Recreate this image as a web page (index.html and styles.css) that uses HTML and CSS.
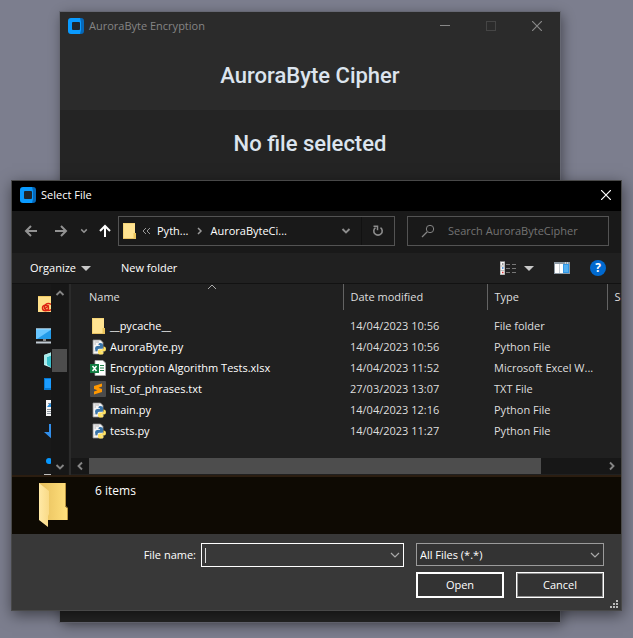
FILE: index.html
```html
<!DOCTYPE html>
<html lang="en">
<head>
<meta charset="utf-8">
<title>AuroraByte Encryption</title>
<link rel="stylesheet" href="styles.css">
</head>
<body>
<svg class="sprite" aria-hidden="true">
  <symbol id="logo" viewBox="0 0 16 16">
    <path d="M3 0H13V16H3Q0 16 0 13V3Q0 0 3 0Z" fill="#0a9bff"/>
    <path d="M12 0H13Q16 0 16 3V13Q16 16 13 16H12L13 12V4Z" fill="#0668b8"/>
    <rect x="4" y="4" width="8" height="8" rx="1" fill="#20262b"/>
  </symbol>
  <symbol id="close" viewBox="0 0 10 10">
    <path d="M0 0L10 10M10 0L0 10" fill="none" stroke="currentColor" stroke-width="1.2"/>
  </symbol>
  <symbol id="chevron" viewBox="0 0 10 10">
    <path d="M1.500 3L5 6.500L8.500 3" fill="none" stroke="currentColor" stroke-width="1.900"/>
  </symbol>
  <symbol id="thin-chevron" viewBox="0 0 10 10">
    <path d="M1 3L5 7L9 3" fill="none" stroke="currentColor" stroke-width="1.200"/>
  </symbol>
  <symbol id="arrow" viewBox="0 0 14 14">
    <path d="M13 7H2M7 2L2 7L7 12" fill="none" stroke="currentColor" stroke-width="2"/>
  </symbol>
  <symbol id="folder" viewBox="0 0 16 16">
    <path d="M2 0H14V10L15 11V16H2Z" fill="#ffe391"/>
    <path d="M2 0H14V1H3V15H2Z" fill="#f5d477"/>
    <path d="M12.500 10H15V16H12.500Z" fill="#eac45b"/>
    <path d="M2 15H15V16H2Z" fill="#e8c263"/>
  </symbol>
  <symbol id="python" viewBox="0 0 16 16">
    <path d="M3 1H10.500L13 3.500V15H3Z" fill="#f5f5f5" stroke="#8e8e8e" stroke-width=".8"/>
    <path d="M4.500 3H9M4.500 5H6M4.500 12H7" stroke="#b5b5b5"/>
    <path d="M8.500 5.200Q8.500 4 10.500 4Q13 4 13 5.800V8.500Q13 9.800 11.500 9.800H9Q7.500 9.800 7.500 11.500V12.200H6.800Q5 12.200 5 9.500Q5 7 7 7H10V6.300H8.500Z" fill="#3974a8"/>
    <path d="M13.500 7.500H14Q16 7.500 16 10Q16 12.500 14 12.500H11.500V13.200H13.500V14Q13.500 15.600 11 15.600Q8 15.600 8 13.800V12Q8 10.500 9.500 10.500H12Q13.500 10.500 13.500 9Z" fill="#ffe263"/>
  </symbol>
</svg>

<main class="app">
  <header class="app-bar">
    <svg class="logo"><use href="#logo"/></svg>
    <span class="app-name">AuroraByte Encryption</span>
    <div class="window-buttons">
      <button aria-label="Minimize"><svg width="10" height="10"><path d="M0 4.500H10" stroke="#888"/></svg></button>
      <button aria-label="Maximize" disabled><svg width="10" height="10"><rect x=".5" y=".5" width="9" height="9" fill="none" stroke="#454545"/></svg></button>
      <button aria-label="Close"><svg width="10" height="10"><use href="#close"/></svg></button>
    </div>
  </header>
  <h1 class="heading">AuroraByte Cipher</h1>
  <p class="status">No file selected</p>
</main>

<section class="dialog" role="dialog" aria-labelledby="dialog-title">
  <header class="dialog-bar">
    <svg class="logo"><use href="#logo"/></svg>
    <h2 id="dialog-title">Select File</h2>
    <button class="dialog-close" aria-label="Close"><svg width="10" height="10"><use href="#close"/></svg></button>
  </header>

  <div class="nav">
    <button class="nav-button" aria-label="Back"><svg width="14" height="14"><use href="#arrow"/></svg></button>
    <button class="nav-button" aria-label="Forward"><svg class="flip" width="14" height="14"><use href="#arrow"/></svg></button>
    <button class="nav-button narrow" aria-label="Recent locations"><svg width="8" height="8"><use href="#chevron"/></svg></button>
    <button class="nav-button up" aria-label="Up"><svg class="turn" width="14" height="14"><use href="#arrow"/></svg></button>
    <div class="address">
      <svg class="icon" width="16" height="16"><use href="#folder"/></svg>
      <svg class="crumb-more" width="9" height="8"><path d="M4 1L1 4L4 7M8 1L5 4L8 7" fill="none" stroke="#999"/></svg>
      <a class="crumb" href="#python-folder">Pyth...</a>
      <svg class="crumb-sep" width="6" height="8"><path d="M1 1L4 4L1 7" fill="none" stroke="#999" stroke-width="1.500"/></svg>
      <a class="crumb" href="#current-folder">AuroraByteCi...</a>
      <button class="address-menu" aria-label="Previous locations"><svg width="10" height="10"><use href="#chevron"/></svg></button>
      <button class="refresh" aria-label="Refresh"><svg width="12" height="12"><path d="M8.500 2.600A4.200 4.200 0 1 1 3.500 2.600" fill="none" stroke="#8c8c8c" stroke-width="1.600"/><path d="M1.500 1.200H5.500V5.200" fill="none" stroke="#8c8c8c" stroke-width="1.500"/></svg></button>
    </div>
    <label class="search">
      <svg width="14" height="14"><circle cx="9" cy="5" r="3.700" fill="none" stroke="#858585"/><path d="M6 8L1 13" stroke="#858585" stroke-width="1.200"/></svg>
      <input type="search" placeholder="Search AuroraByteCipher" aria-label="Search AuroraByteCipher">
    </label>
  </div>

  <div class="toolbar">
    <button class="organize">Organize <span class="drop"></span></button>
    <button>New folder</button>
    <div class="tools">
      <button class="view" aria-label="Change your view">
        <svg width="17" height="14"><rect x="0" y="1" width="5" height="13" fill="#f4f4f4"/><path d="M0 .5H5M0 5H5M0 9.500H5M0 13.500H5M.5 1V14M4.500 1V14" stroke="#a5a5a5" stroke-width=".7"/><path d="M2 3H3.500" stroke="#777" stroke-width="1.500"/><path d="M2 7H3.500" stroke="#2d7dd2" stroke-width="1.500"/><path d="M2 11.500H3.500" stroke="#d33" stroke-width="1.500"/><path d="M6 3.500H10M12 3.500H16M6 7.500H10M12 7.500H16M6 11.500H10M12 11.500H16" stroke="#777"/></svg>
        <span class="drop"></span>
      </button>
      <button aria-label="Show the preview pane">
        <svg width="16" height="12"><rect width="16" height="12" fill="#8d9aa5"/><path d="M1 2H5V11H1ZM5.500 2H9V11H5.500Z" fill="#fff"/><rect x="9" y="2" width="6" height="9" fill="#3298e6"/><rect x="10" y="3" width="4" height="7" fill="#55b0f0"/><path d="M11 1H12M13 1H14" stroke="#fff"/></svg>
      </button>
      <button class="help" aria-label="Help">?</button>
    </div>
  </div>

  <div class="browser">
    <nav class="places" aria-label="Places">
      <ul>
        <li class="root"><a href="#creative" aria-label="Creative Cloud Files"><svg width="16" height="16"><path d="M2 0H16V16H2Z" fill="#ffe08a"/><path d="M2 .5H16" stroke="#efc864"/><g fill="none" stroke="#dc2414" stroke-width="1.500"><ellipse cx="9.500" cy="12" rx="3" ry="2.800"/><ellipse cx="12.500" cy="11" rx="4" ry="3.500"/><path d="M8.500 13L13 9.500"/></g></svg></a></li>
        <li class="root pc"><a href="#pc" aria-label="This PC"><svg width="16" height="16"><rect y="1" width="18" height="10" fill="#68c6ff"/><path d="M1 11L16 1V11Z" fill="#239be9"/><path d="M0 .8H16" stroke="#bce6ff"/><path d="M7 11H10V13H7Z" fill="#888"/><path d="M0 14.500H16" stroke="#c2ccd5" stroke-width="2"/></svg></a></li>
        <li><a href="#objects" aria-label="3D Objects"><svg width="16" height="16"><path d="M0 3L8 0V16L0 13Z" fill="#d0f5f4"/><path d="M3 5L8 3V16L3 13Z" fill="#38c1cc"/><path d="M0 3L8 0V3L3 5V12L0 13Z" fill="#a9eaea"/></svg></a></li>
        <li><a href="#desktop" aria-label="Desktop"><svg width="16" height="16"><rect y="2" width="16" height="12" fill="#0879d1"/><rect x="1" y="3" width="15" height="9" fill="#1b9cff"/></svg></a></li>
        <li><a href="#documents" aria-label="Documents"><svg width="16" height="16"><path d="M2 0H14V16H2Z" fill="#f5f5f5"/><path d="M4 3.500H7M3 11.500H12M3 13.500H12M3 9.500H12" stroke="#8d969e"/><path d="M3 7L6 3L9 7Z" fill="#268dde"/></svg></a></li>
        <li><a href="#downloads" aria-label="Downloads"><svg width="16" height="16"><path d="M5 0H11V8H16L8 15L0 8H5Z" fill="#318eea"/></svg></a></li>
        <li><a href="#music" aria-label="Music"><svg width="16" height="16"><circle cx="5" cy="13" r="3" fill="#0798ff"/></svg></a></li>
        <li><a href="#pictures" aria-label="Pictures"><svg width="16" height="16"><path d="M0 2H16V14H0Z" fill="#bdbdbd"/></svg></a></li>
      </ul>
      <div class="vscroll" aria-hidden="true">
        <svg class="over" width="10" height="10"><use href="#chevron"/></svg>
        <span class="vthumb"></span>
        <svg width="10" height="10"><use href="#chevron"/></svg>
      </div>
    </nav>

    <div class="files">
      <table>
        <colgroup><col><col class="date-col"><col class="type-col"><col class="size-col"></colgroup>
        <thead>
          <tr><th scope="col" aria-sort="ascending">Name<svg class="sort" width="10" height="6"><path d="M1 5L5 1L9 5" fill="none" stroke="#aaa"/></svg></th><th scope="col">Date modified</th><th scope="col">Type</th><th scope="col">Size</th></tr>
        </thead>
        <tbody>
          <tr><td><span class="file"><svg class="icon"><use href="#folder"/></svg>__pycache__</span></td><td>14/04/2023 10:56</td><td>File folder</td><td></td></tr>
          <tr><td><span class="file"><svg class="icon"><use href="#python"/></svg>AuroraByte.py</span></td><td>14/04/2023 10:56</td><td>Python File</td><td></td></tr>
          <tr><td><span class="file"><svg class="icon" viewBox="0 0 16 16"><path d="M5 .5H13L15.500 3V15.500H5Z" fill="#fff" stroke="#aaa" stroke-width=".8"/><path d="M10 5.500H14M10 8H14M10 10.500H14" stroke="#21834b"/><rect y="4" width="9" height="9" fill="#107c41"/><path d="M2.500 6L6.500 11M6.500 6L2.500 11" stroke="#fff" stroke-width="1.500"/></svg>Encryption Algorithm Tests.xlsx</span></td><td>14/04/2023 11:52</td><td>Microsoft Excel W...</td><td></td></tr>
          <tr><td><span class="file"><svg class="icon" viewBox="0 0 16 16"><rect width="16" height="16" rx="1" fill="#4b4b4b"/><path d="M4 5L12 2.500V5.500L8.500 6.700L12 8V11L4 13.500V10.500L7.500 9.300L4 8Z" fill="#ff9800"/></svg>list_of_phrases.txt</span></td><td>27/03/2023 13:07</td><td>TXT File</td><td></td></tr>
          <tr><td><span class="file"><svg class="icon"><use href="#python"/></svg>main.py</span></td><td>14/04/2023 12:16</td><td>Python File</td><td></td></tr>
          <tr><td><span class="file"><svg class="icon"><use href="#python"/></svg>tests.py</span></td><td>14/04/2023 11:27</td><td>Python File</td><td></td></tr>
        </tbody>
      </table>
      <div class="hscroll" aria-hidden="true">
        <svg class="left" width="10" height="10"><use href="#chevron"/></svg>
        <span class="track"><span class="hthumb"></span></span>
        <svg class="right" width="10" height="10"><use href="#chevron"/></svg>
      </div>
    </div>
  </div>

  <div class="details">
    <svg width="30" height="44"><defs><linearGradient id="back"><stop stop-color="#e6be5b"/><stop offset="1" stop-color="#ffdf7c"/></linearGradient><linearGradient id="front"><stop stop-color="#ffe9a6"/><stop offset="1" stop-color="#f9da87"/></linearGradient></defs><path d="M1 0H27V23L29 25V37H1Z" fill="url(#back)"/><path d="M27.500 0V23L29.500 25V37" fill="none" stroke="#b99540"/><path d="M1 0L11 8V31L10 33V44L1 37Z" fill="url(#front)"/></svg>
    <p>6 items</p>
  </div>

  <form class="footer">
    <div class="fields">
      <label class="name-label" for="file-name">File name:</label>
      <div class="field name-field">
        <input id="file-name" type="text">
        <span class="caret"></span>
        <svg class="field-arrow" width="10" height="10"><use href="#thin-chevron"/></svg>
      </div>
      <div class="field type-field">
        <select aria-label="File type"><option>All Files (*.*)</option></select>
        <svg class="field-arrow" width="10" height="10"><use href="#thin-chevron"/></svg>
      </div>
    </div>
    <div class="actions">
      <button type="button" class="primary">Open</button>
      <button type="button">Cancel</button>
    </div>
    <svg class="grip" width="8" height="8"><path d="M6 0H8V2H6ZM3 3H5V5H3ZM6 3H8V5H6ZM0 6H2V8H0ZM3 6H5V8H3ZM6 6H8V8H6Z" fill="#bbb"/></svg>
  </form>
</section>
</body>
</html>
```
FILE: styles.css
```css
* { box-sizing: border-box; }

body {
  margin: 0;
  min-height: 100vh;
  display: flex;
  padding: 12px 73px 16px 60px;
  position: relative;
  overflow: hidden;
  background: #7c7e8e;
  color: #fff;
  font: 11px/16px "Open Sans", "Noto Sans", sans-serif;
}

h1, h2, p, ul { margin: 0; padding: 0; }
ul { list-style: none; }
svg { display: block; flex: none; }
button, input, select { font: inherit; color: inherit; }
button { background: none; border: 0; padding: 0; }
a { color: inherit; text-decoration: none; }

.sprite { position: absolute; width: 0; height: 0; }
.logo, .icon { width: 16px; height: 16px; flex: none; }

/* Application window */
.app {
  flex: 1;
  background: #242424;
  box-shadow: 0 0 0 1px #666873, 2px 3px 12px rgba(0, 0, 0, .45);
}
.app-bar {
  display: flex;
  align-items: center;
  height: 30px;
  padding: 0 0 2px 8px;
  gap: 5px;
  background: #2b2b2b;
  color: #858585;
}
.window-buttons { display: flex; margin-left: auto; }
.window-buttons button { width: 46px; height: 28px; display: grid; place-items: center; color: #888; }
.heading, .status {
  font: 500 22px/28px Roboto, sans-serif;
  color: #dce4ee;
  text-align: center;
}
.heading { background: #2b2b2b; padding: 20px 0; }
.status { padding: 20px 0; }

/* File dialog */
.dialog {
  position: absolute;
  top: 180px;
  left: 11px;
  right: 11px;
  border: 1px solid #484848;
  background: #202020;
  box-shadow: 1px 4px 14px rgba(0, 0, 0, .5);
}
.dialog-bar {
  display: flex;
  align-items: center;
  height: 30px;
  padding: 0 0 2px 8px;
  gap: 5px;
  background: #000;
}
.dialog-bar h2 { font: inherit; }
.dialog-close { margin-left: auto; width: 30px; height: 28px; display: grid; place-items: center; }

.nav {
  display: flex;
  align-items: center;
  height: 42px;
  padding: 0 12px 2px 4px;
  background: #191919;
}
.nav-button { width: 30px; height: 30px; display: grid; place-items: center; color: #929292; }
.nav-button.narrow { width: 16px; }
.nav-button.up { width: 26px; color: #fff; }
.flip { transform: scaleX(-1); }
.turn { transform: rotate(90deg); }
.address, .search {
  display: flex;
  align-items: center;
  height: 30px;
  border: 1px solid #535353;
}
.address { flex: 1; padding-left: 2px; }
.crumb-more { margin: 0 6px 0 5px; }
.crumb { white-space: nowrap; }
.crumb-sep { margin: 0 7px 0 9px; }
.address-menu { margin-left: auto; width: 30px; height: 28px; display: grid; place-items: center; color: #8c8c8c; }
.refresh { width: 33px; height: 28px; display: grid; place-items: center; border-left: 1px solid #111; }
.search { width: 202px; margin-left: 12px; padding-left: 13px; gap: 13px; }
.search input { flex: 1; min-width: 0; padding: 0; border: 0; outline: 0; background: none; }
.search input::placeholder { color: #737373; opacity: 1; }

.toolbar {
  display: flex;
  align-items: center;
  height: 31px;
  padding: 0 15px 0 18px;
  gap: 30px;
  border-bottom: 1px solid #121212;
}
.organize, .view { display: flex; align-items: center; gap: 5px; }
.view { gap: 7px; }
.drop { border: 5px solid transparent; border-top-color: #c8c8c8; border-bottom: 0; }
.tools { display: flex; align-items: center; gap: 20px; margin-left: auto; }
.help { width: 16px; height: 16px; border-radius: 8px; background: #0069cf; font-size: 12px; font-weight: 700; line-height: 16px; }

.browser { display: flex; height: 191px; overflow: hidden; }
.places { display: flex; width: 59px; background: #191919; border-right: 2px solid #2b2b2b; }
.places ul { width: 39px; overflow: hidden; padding-top: 8px; }
.places li { height: 24px; padding: 4px 0 4px 32px; }
.places .root { padding-left: 24px; }
.places .pc { margin-top: 8px; }
.vscroll {
  display: flex;
  flex-direction: column;
  align-items: center;
  width: 17px;
  padding: 4px 0 3px;
  background: #171717;
  color: #858585;
}
.vthumb { width: 15px; height: 23px; margin: 51px 0 auto; background: #4d4d4d; }
.over { transform: scaleY(-1); }

.files { flex: 1; min-width: 0; display: flex; flex-direction: column; justify-content: space-between; overflow: hidden; }
table { width: 100%; table-layout: fixed; border-collapse: collapse; }
.date-col { width: 144px; }
.type-col { width: 120px; }
.size-col { width: 14px; }
th, td { padding: 0 0 0 7px; text-align: left; font-weight: 400; white-space: nowrap; overflow: hidden; color: #dedede; }
th { height: 26px; border-left: 1px solid #636363; }
td { height: 21px; }
th:first-child { position: relative; border-left: 0; padding-left: 18px; }
td:first-child { padding-left: 19px; color: #fff; }
thead::after { content: ""; display: block; height: 5px; }
.sort { position: absolute; top: 0; left: 50%; }
.file { display: flex; align-items: center; gap: 4px; }

.hscroll { display: flex; align-items: center; height: 17px; background: #171717; color: #858585; border-bottom: 1px solid #202020; }
.hscroll svg { margin: 0 4px; }
.track { flex: 1; height: 16px; }
.hthumb { display: block; width: 88%; height: 100%; background: #4d4d4d; }
.left { transform: rotate(90deg); }
.right { transform: rotate(-90deg); }

.details {
  display: flex;
  gap: 27px;
  height: 59px;
  padding: 6px 26px;
  background: #0e0a03;
  border-top: 2px solid #2b1d10;
}
.details p { font-size: 12px; }

.footer { position: relative; background: #383838; padding: 9px 17px 12px 0; }
.fields { display: flex; align-items: flex-start; }
.name-label { width: 184px; padding: 4px 0; margin-right: 5px; text-align: right; }
.field { position: relative; }
.name-field { flex: 1; }
.type-field { width: 188px; margin-left: 12px; }
.field input, .field select {
  display: block;
  width: 100%;
  height: 24px;
  padding: 0 22px 0 6px;
  border: 1px solid #fff;
  border-radius: 0;
  outline: 0;
  background: #383838;
  appearance: none;
}
.field select { height: 23px; padding-left: 3px; border-color: #9b9b9b; background: #333; }
.field-arrow { position: absolute; right: 4px; top: 7px; color: #aaa; pointer-events: none; }
.caret { position: absolute; left: 4px; top: 5px; width: 1px; height: 15px; background: #ddd; }
.actions { display: flex; justify-content: flex-end; gap: 12px; margin-top: 5px; }
.actions button { width: 88px; height: 26px; background: #333; border: 1px solid #fff; box-shadow: inset 0 0 0 1px #929292; }
.actions .primary { border-width: 2px; box-shadow: none; }
.grip { position: absolute; right: 3px; bottom: 2px; }
```
